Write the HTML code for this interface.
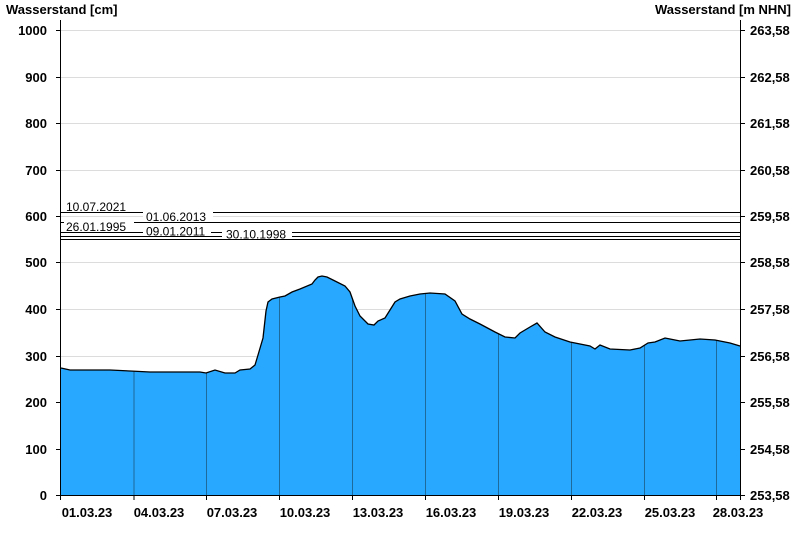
<!DOCTYPE html>
<html><head><style>
body{margin:0;background:#fff;width:800px;height:550px;overflow:hidden}
svg text{font-family:"Liberation Sans",Arial,sans-serif}
.b{font-weight:bold;font-size:13px;fill:#000}
.s{font-size:12px;fill:#000}
</style></head><body>
<svg width="800" height="550" xmlns="http://www.w3.org/2000/svg">
<defs><clipPath id="c"><polygon id="pp" points="61,495 61,368 70,370 110,370 130,371 150,372 200,372 206,373 215,370 225,373 235,373 240,370 250,369 255,365 258,355 263,338 266,311 268,302 272,299 280,297 285,296 292,292 300,289 312,284 315,280 318,277 322,276 327,277 335,281 345,286 350,292 355,306 360,316 368,324 374,325 378,321 385,318 390,310 395,302 400,299 410,296 420,294 430,293 445,294 455,301 462,314 470,319 480,324 495,332 505,337 515,338 520,333 530,327 537,323 545,332 555,337 570,342 590,346 595,349 600,345 610,349 630,350 640,348 648,343 655,342 665,338 670,339 680,341 690,340 700,339 715,340 730,343 740,346 740,495"/></clipPath></defs>
<g stroke="#dcdcdc" stroke-width="1">
<line x1="61" y1="30.5" x2="740" y2="30.5"/><line x1="61" y1="77.5" x2="740" y2="77.5"/><line x1="61" y1="123.5" x2="740" y2="123.5"/><line x1="61" y1="170.5" x2="740" y2="170.5"/><line x1="61" y1="216.5" x2="740" y2="216.5"/><line x1="61" y1="262.5" x2="740" y2="262.5"/><line x1="61" y1="309.5" x2="740" y2="309.5"/><line x1="61" y1="356.5" x2="740" y2="356.5"/><line x1="61" y1="402.5" x2="740" y2="402.5"/><line x1="61" y1="449.5" x2="740" y2="449.5"/>
</g>
<g stroke="#000" stroke-width="1">
<line x1="61" y1="212.5" x2="740" y2="212.5"/><line x1="61" y1="222.5" x2="740" y2="222.5"/><line x1="61" y1="232.5" x2="740" y2="232.5"/><line x1="61" y1="236.5" x2="740" y2="236.5"/><line x1="61" y1="239.5" x2="740" y2="239.5"/>
</g>
<rect x="64" y="200" width="76" height="12" fill="#fff"/><text class="s" x="66" y="211">10.07.2021</text>
<rect x="143" y="211" width="70" height="11" fill="#fff"/><text class="s" x="146" y="221">01.06.2013</text>
<rect x="64" y="221" width="70" height="11" fill="#fff"/><text class="s" x="66" y="231">26.01.1995</text>
<rect x="143" y="226" width="68" height="10" fill="#fff"/><text class="s" x="146" y="235.5">09.01.2011</text>
<rect x="222" y="229" width="70" height="10" fill="#fff"/><text class="s" x="226" y="238.5">30.10.1998</text>
<use href="#pp" fill="#29a8ff"/>
<g clip-path="url(#c)" stroke="#1e6a9a" stroke-width="1">
<line x1="134" y1="0" x2="134" y2="495"/><line x1="206.5" y1="0" x2="206.5" y2="495"/><line x1="279.5" y1="0" x2="279.5" y2="495"/><line x1="352.5" y1="0" x2="352.5" y2="495"/><line x1="425.5" y1="0" x2="425.5" y2="495"/><line x1="498.5" y1="0" x2="498.5" y2="495"/><line x1="571.5" y1="0" x2="571.5" y2="495"/><line x1="644.5" y1="0" x2="644.5" y2="495"/><line x1="716.5" y1="0" x2="716.5" y2="495"/>
</g>
<polyline fill="none" stroke="#000" stroke-width="1.3" points="61,368 70,370 110,370 130,371 150,372 200,372 206,373 215,370 225,373 235,373 240,370 250,369 255,365 258,355 263,338 266,311 268,302 272,299 280,297 285,296 292,292 300,289 312,284 315,280 318,277 322,276 327,277 335,281 345,286 350,292 355,306 360,316 368,324 374,325 378,321 385,318 390,310 395,302 400,299 410,296 420,294 430,293 445,294 455,301 462,314 470,319 480,324 495,332 505,337 515,338 520,333 530,327 537,323 545,332 555,337 570,342 590,346 595,349 600,345 610,349 630,350 640,348 648,343 655,342 665,338 670,339 680,341 690,340 700,339 715,340 730,343 740,346"/>
<g stroke="#000" stroke-width="1">
<line x1="60.5" y1="20" x2="60.5" y2="500"/><line x1="740.5" y1="20" x2="740.5" y2="500"/><line x1="56" y1="495.5" x2="745" y2="495.5"/>
<line x1="56" y1="30.5" x2="61" y2="30.5"/><line x1="56" y1="77.5" x2="61" y2="77.5"/><line x1="56" y1="123.5" x2="61" y2="123.5"/><line x1="56" y1="170.5" x2="61" y2="170.5"/><line x1="56" y1="216.5" x2="61" y2="216.5"/><line x1="56" y1="262.5" x2="61" y2="262.5"/><line x1="56" y1="309.5" x2="61" y2="309.5"/><line x1="56" y1="356.5" x2="61" y2="356.5"/><line x1="56" y1="402.5" x2="61" y2="402.5"/><line x1="56" y1="449.5" x2="61" y2="449.5"/>
<line x1="740" y1="30.5" x2="745" y2="30.5"/><line x1="740" y1="77.5" x2="745" y2="77.5"/><line x1="740" y1="123.5" x2="745" y2="123.5"/><line x1="740" y1="170.5" x2="745" y2="170.5"/><line x1="740" y1="216.5" x2="745" y2="216.5"/><line x1="740" y1="262.5" x2="745" y2="262.5"/><line x1="740" y1="309.5" x2="745" y2="309.5"/><line x1="740" y1="356.5" x2="745" y2="356.5"/><line x1="740" y1="402.5" x2="745" y2="402.5"/><line x1="740" y1="449.5" x2="745" y2="449.5"/>
<line x1="134" y1="495" x2="134" y2="500"/><line x1="206.5" y1="495" x2="206.5" y2="500"/><line x1="279.5" y1="495" x2="279.5" y2="500"/><line x1="352.5" y1="495" x2="352.5" y2="500"/><line x1="425.5" y1="495" x2="425.5" y2="500"/><line x1="498.5" y1="495" x2="498.5" y2="500"/><line x1="571.5" y1="495" x2="571.5" y2="500"/><line x1="644.5" y1="495" x2="644.5" y2="500"/><line x1="716.5" y1="495" x2="716.5" y2="500"/>
</g>
<text class="b" x="6" y="14">Wasserstand [cm]</text>
<text class="b" x="791" y="14" text-anchor="end">Wasserstand [m NHN]</text>
<g class="b" text-anchor="end">
<text x="47" y="35">1000</text><text x="47" y="82">900</text><text x="47" y="128">800</text><text x="47" y="175">700</text><text x="47" y="221">600</text><text x="47" y="267">500</text><text x="47" y="314">400</text><text x="47" y="361">300</text><text x="47" y="407">200</text><text x="47" y="454">100</text><text x="47" y="500">0</text>
</g>
<g class="b">
<text x="750" y="35">263,58</text><text x="750" y="82">262,58</text><text x="750" y="128">261,58</text><text x="750" y="175">260,58</text><text x="750" y="221">259,58</text><text x="750" y="267">258,58</text><text x="750" y="314">257,58</text><text x="750" y="361">256,58</text><text x="750" y="407">255,58</text><text x="750" y="454">254,58</text><text x="750" y="500">253,58</text>
</g>
<g class="b" text-anchor="middle">
<text x="87" y="517">01.03.23</text><text x="159" y="517">04.03.23</text><text x="232" y="517">07.03.23</text><text x="305" y="517">10.03.23</text><text x="378" y="517">13.03.23</text><text x="451" y="517">16.03.23</text><text x="524" y="517">19.03.23</text><text x="597" y="517">22.03.23</text><text x="670" y="517">25.03.23</text><text x="738" y="517">28.03.23</text>
</g>
</svg>
</body></html>
